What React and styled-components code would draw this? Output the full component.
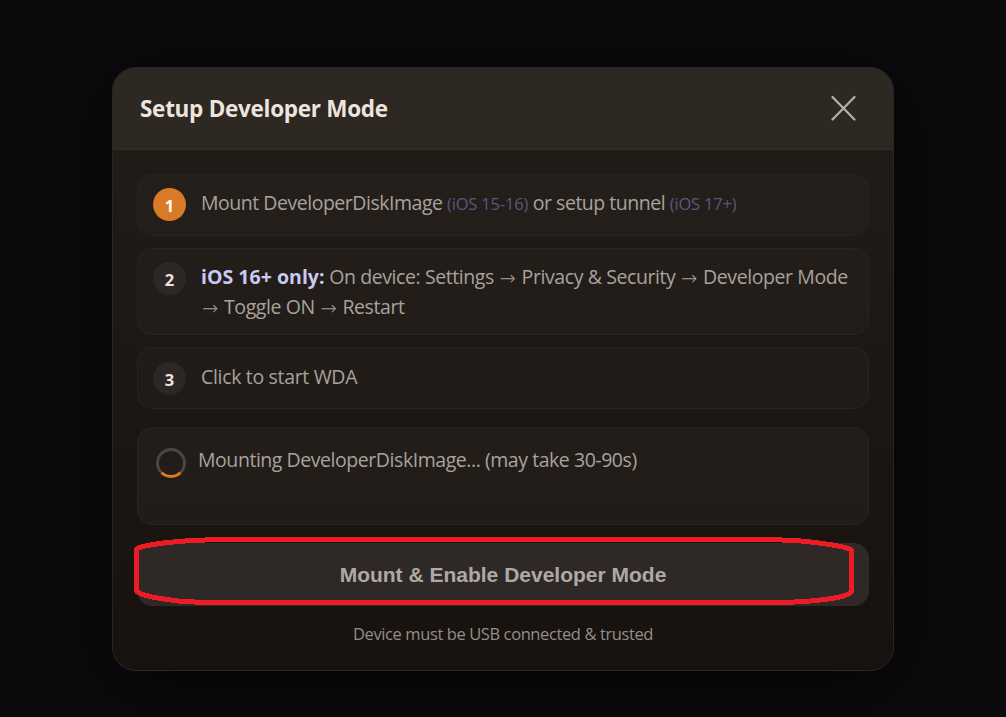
import React from "react";
import styled, { createGlobalStyle } from "styled-components";

const GlobalStyle = createGlobalStyle`
  * { box-sizing: border-box; }
  body {
    margin: 0;
    background: #0b0b0e;
    font-family: "Open Sans", "Noto Sans", sans-serif;
    overflow: hidden;
  }
`;

const Backdrop = styled.main`
  position: relative;
  height: 717px;
  padding-top: 67px;
  display: flex;
  justify-content: center;
  align-items: flex-start;
`;

const Dialog = styled.section`
  width: 782px;
  height: 604px;
  display: flex;
  flex-direction: column;
  border: 1px solid #2a2622;
  border-radius: 24px;
  overflow: hidden;
  background: linear-gradient(180deg, #231d19 0%, #17120e 100%);
  box-shadow: 0 15px 75px rgba(0, 0, 0, 0.6);
`;

const Header = styled.header`
  height: 82px;
  flex: none;
  display: flex;
  align-items: center;
  justify-content: space-between;
  padding: 0 36px 0 27px;
  background: #2d2822;
  border-bottom: 1px solid #35302c;
`;

const Title = styled.h2`
  margin: 1px 0 0;
  font-size: 22.5px;
  font-weight: 700;
  line-height: 30px;
  letter-spacing: -0.28px;
  color: #ede4de;
  white-space: nowrap;
`;

const CloseButton = styled.button`
  display: flex;
  padding: 0;
  border: 0;
  background: none;
  color: #b3aea7;
`;

const Body = styled.div`
  display: flex;
  flex-direction: column;
  padding: 24px;
`;

const Steps = styled.ol`
  list-style: none;
  margin: 0 0 18px;
  padding: 0;
  display: flex;
  flex-direction: column;
  gap: 12px;
`;

const Card = styled.li`
  display: flex;
  align-items: flex-start;
  gap: 15px;
  height: ${(p) => p.$height}px;
  padding: ${(p) => p.$top || 13}px 15px 0;
  border: 1px solid #292420;
  border-radius: 15px;
  background: rgba(255, 255, 255, 0.02);
`;

const Badge = styled.span`
  flex: none;
  width: 33px;
  height: 33px;
  padding-top: 1px;
  border-radius: 50%;
  display: grid;
  place-items: center;
  font-size: 16.5px;
  font-weight: 700;
  background: ${(p) => (p.$active ? "#d87a28" : "#2d2825")};
  color: ${(p) => (p.$active ? "#fff" : "#ede4de")};
`;

const Text = styled.div`
  font-size: 19.5px;
  line-height: 30px;
  letter-spacing: ${(p) => p.$tracking}px;
  color: #a8a29e;
  white-space: nowrap;
`;

const Hint = styled.span`
  font-size: 16.5px;
  letter-spacing: ${(p) => p.$tracking}px;
  color: #58587f;
`;

const Strong = styled.strong`
  font-weight: 700;
  letter-spacing: 0.02px;
  color: #c7caf5;
`;

const Arrow = styled.span`
  position: relative;
  top: 1px;
  display: inline-block;
  margin: 0 1px;
  font-family: "DejaVu Sans", sans-serif;
  font-weight: 200;
  font-size: 19.5px;
  line-height: 20px;
  letter-spacing: 0;
`;

const Status = styled.div`
  display: flex;
  align-items: flex-start;
  gap: 12px;
  height: 98px;
  padding: 18px;
  margin-bottom: 18px;
  border: 1px solid #292420;
  border-radius: 15px;
  background: rgba(255, 255, 255, 0.03);
`;

const Spinner = styled.span`
  flex: none;
  width: 30px;
  height: 30px;
  margin-top: 2px;
  border: 3px solid #4b4642;
  border-bottom-color: #d87a28;
  border-radius: 50%;
`;

const StatusText = styled(Text)`
  margin-top: -1px;
`;

const Action = styled.button`
  height: 63px;
  border: 1px solid #302b28;
  border-radius: 15px;
  background: #2e2926;
  color: #aea9a5;
  font-family: "Liberation Sans", Arial, sans-serif;
  font-size: 21px;
  font-weight: 700;
`;

const Note = styled.p`
  margin: 16px 0 0;
  font-size: 16.5px;
  line-height: 24px;
  letter-spacing: -0.4px;
  text-align: center;
  color: #948e8a;
`;

const Highlight = styled.svg`
  position: absolute;
  inset: 0;
  pointer-events: none;
`;

export default function App() {
  return (
    <Backdrop>
      <GlobalStyle />
      <Dialog>
        <Header>
          <Title>Setup Developer Mode</Title>
          <CloseButton aria-label="Close">
            <svg width="27" height="27" viewBox="0 0 27 27" fill="none" stroke="currentColor" strokeWidth="2.3" strokeLinecap="round">
              <path d="M2.5 2 24.5 24.5M24.5 2 2.5 24.5" />
            </svg>
          </CloseButton>
        </Header>
        <Body>
          <Steps>
            <Card $height={62}>
              <Badge $active>1</Badge>
              <Text $tracking={-0.48}>
                Mount DeveloperDiskImage <Hint $tracking={-0.18}>(iOS 15-16)</Hint> or setup tunnel{" "}
                <Hint $tracking={-0.18}>(iOS 17+)</Hint>
              </Text>
            </Card>
            <Card $height={87}>
              <Badge>2</Badge>
              <Text $tracking={-0.41}>
                <Strong>iOS 16+ only:</Strong> On device: Settings <Arrow>→</Arrow> Privacy &amp; Security{" "}
                <Arrow>→</Arrow> Developer Mode
                <br />
                <Arrow>→</Arrow> Toggle ON <Arrow>→</Arrow> Restart
              </Text>
            </Card>
            <Card $height={62} $top={14}>
              <Badge>3</Badge>
              <Text $tracking={-0.33}>Click to start WDA</Text>
            </Card>
          </Steps>
          <Status>
            <Spinner />
            <StatusText $tracking={-0.45}>Mounting DeveloperDiskImage... (may take 30-90s)</StatusText>
          </Status>
          <Action>Mount &amp; Enable Developer Mode</Action>
          <Note>Device must be USB connected &amp; trusted</Note>
        </Body>
      </Dialog>
      <Highlight width="1006" height="717" viewBox="0 0 1006 717" fill="none" stroke="#ed1c24" strokeWidth="5" strokeLinejoin="round" shapeRendering="crispEdges">
        <path d="M136.5 549.5 138.5 548 145 546 153 544.5 167 542.5 185 541 205 540 216 539.5H769L782 540 801 541 815 542.5 830 544.5 843 547 850 549 851.5 550.5V591L850 593.5 842 596.5 832 598.5 820 600 808 601.2 790 602.2 780 602.5H206L195 602 178 601 167 599.5 152 597 143 594.5 138 592.5 136.5 591Z" />
      </Highlight>
    </Backdrop>
  );
}
